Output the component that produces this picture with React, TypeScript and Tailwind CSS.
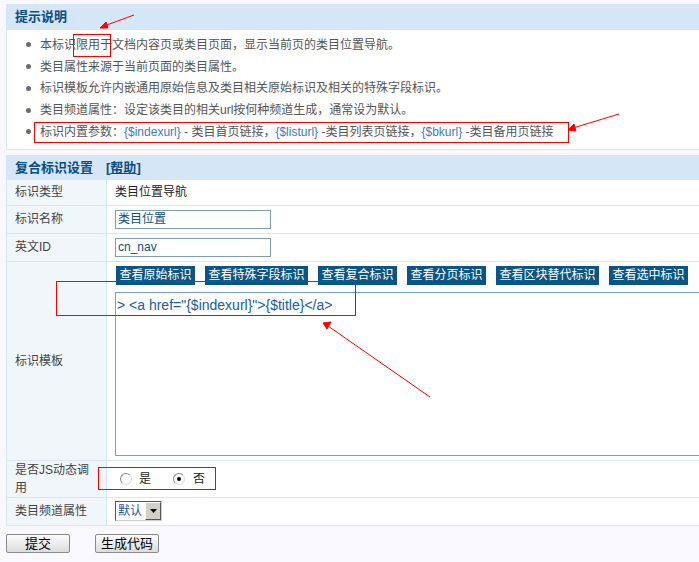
import React from "react";

const tips: React.ReactNode[] = [
  "本标识限用于文档内容页或类目页面，显示当前页的类目位置导航。",
  "类目属性来源于当前页面的类目属性。",
  "标识模板允许内嵌通用原始信息及类目相关原始标识及相关的特殊字段标识。",
  "类目频道属性：设定该类目的相关url按何种频道生成，通常设为默认。",
  <>
    标识内置参数：<span className="text-[#3b7cc0]">{"{$indexurl}"}</span> - 类目首页链接，
    <span className="text-[#3b7cc0]">{"{$listurl}"}</span> -类目列表页链接，
    <span className="text-[#3b7cc0]">{"{$bkurl}"}</span> -类目备用页链接
  </>,
];

const viewButtons = ["查看原始标识", "查看特殊字段标识", "查看复合标识", "查看分页标识", "查看区块替代标识", "查看选中标识"];

// one labelled row of the settings table
const Row = ({ label, h, children }: { label: React.ReactNode; h: string; children: React.ReactNode }) => (
  <div className={`flex border-b border-[#d4e8f8] ${h}`}>
    <div className="w-[100px] shrink-0 bg-[#f1f6fb] border-r border-[#d4e8f8] pl-[8px] flex items-center text-[#444] leading-[18px]">
      {label}
    </div>
    <div className="flex-1 bg-white pl-[8px] flex items-center">{children}</div>
  </div>
);

const Radio = ({ checked }: { checked?: boolean }) => (
  <span className="w-[12px] h-[12px] rounded-full border border-t-[#888] border-l-[#888] border-r-[#ddd] border-b-[#ddd] bg-white flex items-center justify-center">
    {checked && <span className="w-[4px] h-[4px] rounded-full bg-black" />}
  </span>
);

export default function App() {
  return (
    <div
      className="relative w-[699px] h-[562px] overflow-hidden bg-[#f8f8fe] pt-[4px] text-[12px]"
      style={{ fontFamily: '"Liberation Sans", "Noto Sans CJK SC", sans-serif' }}
    >
      {/* tips panel */}
      <div className="ml-[6px] border-l border-b border-[#d4e8f8]">
        <div className="h-[26px] bg-[#d5e6f6] pl-[8px] flex items-center text-[13px] font-bold text-[#0c4c7e]">提示说明</div>
        <ul className="bg-white pt-[4px] pb-[6px]">
          {tips.map((t, i) => (
            <li key={i} className="flex items-center h-[21.75px] text-[#555]">
              <span className="ml-[19px] mr-[9px] w-[5px] h-[5px] rounded-full bg-[#6a6a7a]" />
              <span className="whitespace-nowrap">{t}</span>
            </li>
          ))}
        </ul>
      </div>

      {/* settings panel */}
      <div className="ml-[6px] mt-[5px] border-l border-[#d4e8f8]">
        <div className="h-[25px] bg-[#d5e6f6] pl-[8px] flex items-center text-[13px] font-bold text-[#0c4c7e]">
          复合标识设置
          <span className="ml-[13px]">
            [<span className="underline">帮助</span>]
          </span>
        </div>
        <Row label="标识类型" h="h-[26px]">
          <span className="text-[#222]">类目位置导航</span>
        </Row>
        <Row label="标识名称" h="h-[28px]">
          <div className="w-[156px] h-[19px] border border-[#7f9db9] bg-white pl-[2px] leading-[17px] text-[#0f4d80]">类目位置</div>
        </Row>
        <Row label="英文ID" h="h-[28px]">
          <div className="w-[156px] h-[19px] border border-[#7f9db9] bg-white pl-[2px] leading-[17px] text-[#0f4d80]">cn_nav</div>
        </Row>
        <div className="flex border-b border-[#d4e8f8] h-[199px]">
          <div className="w-[100px] shrink-0 bg-[#f1f6fb] border-r border-[#d4e8f8] pl-[8px] flex items-center text-[#444]">标识模板</div>
          <div className="flex-1 bg-white pl-[8px] pt-[4px]">
            <div className="flex gap-[10px] pl-[1px]">
              {viewButtons.map((b) => (
                <span key={b} className="h-[19px] px-[3.5px] bg-[#0b5584] text-white leading-[19px] whitespace-nowrap">
                  {b}
                </span>
              ))}
            </div>
            <div className="mt-[7px] w-[700px] h-[164px] border border-[#7b9ec8] bg-white pl-[1px] pt-[2px] text-[14px] text-[#1a5c9e]">
              {'> <a href="{$indexurl}">{$title}</a>'}
            </div>
          </div>
        </div>
        <Row label={<span>是否JS动态调<br />用</span>} h="h-[37px]">
          <div className="flex items-center pl-[5px] text-[#222]">
            <Radio />
            <span className="ml-[7px]">是</span>
            <span className="ml-[22px]"><Radio checked /></span>
            <span className="ml-[8px]">否</span>
          </div>
        </Row>
        <Row label="类目频道属性" h="h-[28px]">
          <div className="flex h-[20px] border border-t-[#555] border-l-[#555] border-r-[#ccc] border-b-[#ccc] bg-white">
            <span className="pl-[2px] pr-[3px] leading-[18px] text-[#1a5c9e]">默认</span>
            <span className="w-[16px] h-[18px] bg-[#d4d0c8] border border-t-white border-l-white border-r-[#555] border-b-[#555] flex items-center justify-center">
              <svg width="7" height="4" viewBox="0 0 7 4"><path d="M0 0h7L3.5 4z" fill="#000" /></svg>
            </span>
          </div>
        </Row>
      </div>

      <div className="flex gap-[25px] ml-[6px] mt-[8px]">
        {["提交", "生成代码"].map((b) => (
          <button
            key={b}
            className="w-[64px] h-[19px] border border-[#8a8a8a] rounded-[2px] bg-gradient-to-b from-[#fcfcfc] to-[#dcdcdc] text-[13px] leading-[17px] text-black"
          >
            {b}
          </button>
        ))}
      </div>

      {/* red annotation marks */}
      <div className="absolute left-[73px] top-[34px] w-[38px] h-[23px] border border-[#ff0000]" />
      <div className="absolute left-[34px] top-[122px] w-[535px] h-[21px] border border-[#ff0000]" />
      <div className="absolute left-[56px] top-[281px] w-[300px] h-[35px] border border-[#ff0000]" />
      <div className="absolute left-[98px] top-[467px] w-[118px] h-[23px] border border-[#ff0000]" />
      <svg className="absolute left-0 top-0 pointer-events-none" width="699" height="562">
        <g stroke="#ff0000" strokeWidth="1" fill="#ff0000">
          <line x1="134" y1="15" x2="104" y2="26" />
          <path d="M100 28 L106 22 L108 28 Z" />
          <line x1="619" y1="114" x2="573" y2="128" />
          <path d="M568 130 L574 124 L576 131 Z" />
          <line x1="430" y1="397" x2="328" y2="326" />
          <path d="M323 323 L331 322 L327 329 Z" />
        </g>
      </svg>
    </div>
  );
}
